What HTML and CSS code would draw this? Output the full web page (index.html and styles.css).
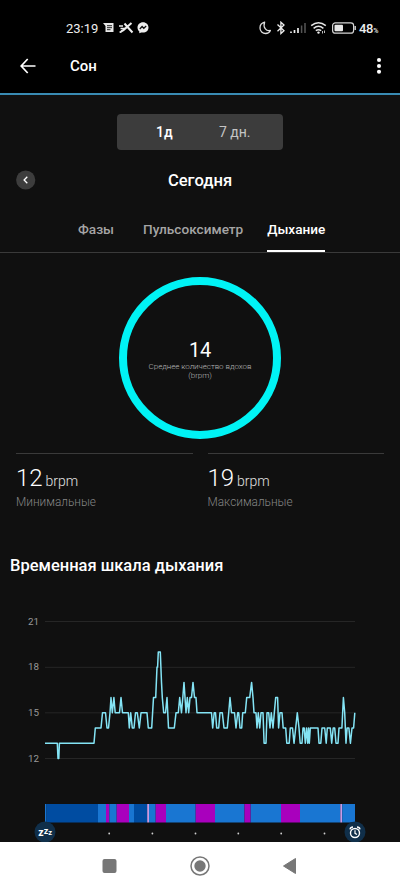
FILE: index.html
```html
<!DOCTYPE html>
<html lang="ru">
<head>
<meta charset="utf-8">
<title>Сон</title>
<link rel="stylesheet" href="styles.css">
</head>
<body>
<div class="phone">
  <header class="top">
    <div class="status">
      <span class="clock">23:19</span>
      <svg class="status-left" width="48" height="14" viewBox="0 0 48 14">
        <path fill="#e8e8e8" d="M0 2H10.500V11H2.500V5Z"/>
        <path stroke="#222" stroke-width="1" d="M4 4.700H9M4 6.700H9M4 8.700H7.500"/>
        <path fill="none" stroke="#eee" stroke-width="2" d="M28.500 2L24 6Q20.500 9.500 18 10.500M21.500 2.500L25 6.500L29.500 11.500"/>
        <path stroke="#eee" stroke-width="1.500" d="M16 5H20M17.500 7.500H22"/>
        <circle cx="17.500" cy="11" r="1.100" fill="#eee"/>
        <path fill="#eee" d="M40 1.200C36.800 1.200 34.500 3.500 34.500 6.400C34.500 8.200 35.200 9.400 36.300 10.400V12.300L38.300 11.400C42.500 12.200 45.500 9.800 45.500 6.400C45.500 3.500 43.200 1.200 40 1.200Z"/>
        <path fill="none" stroke="#111" stroke-width="1.300" d="M36.800 8L39.100 5.500L40.800 7.300L43.200 5.100"/>
      </svg>
      <svg class="status-right" width="98" height="14" viewBox="0 0 98 14">
        <path fill="none" stroke="#ddd" stroke-width="1.300" stroke-linejoin="round" d="M5.600 1.200C2.800 2 1 4.200 1 6.900C1 10.200 3.600 12.500 6.600 12.500C8.800 12.500 10.600 11.400 11.400 9.500C7 10.600 3.800 6 5.600 1.200Z"/>
        <path fill="none" stroke="#eee" stroke-width="1.300" d="M18.500 3.500L25 9.700L21.900 12.500V1.200L25 4L18.500 10.200"/>
        <path stroke="#eee" stroke-width="1.700" d="M32 12V10.500M35.500 12V9M39 12V7"/>
        <path stroke="#555" stroke-width="1.500" d="M42.600 12V4.500M46 12V2"/>
        <g fill="none" stroke="#e5e5e5" stroke-width="1.500"><path d="M52.200 4.600Q59.500-1.200 66.800 4.600M54.600 7.300Q59.500 3.300 64.400 7.300M56.800 9.700Q59.500 7.600 62.200 9.700"/></g>
        <circle cx="59.500" cy="11.600" r="1.200" fill="#eee"/>
        <path stroke="#bbb" stroke-width="1" d="M63.500 10V12.500M65.500 9.500V12"/>
        <rect x="73.600" y="1.800" width="21" height="10.400" rx="2.800" fill="none" stroke="#d5d5d5" stroke-width="1.200"/>
        <rect x="75.500" y="3.700" width="8.500" height="6.600" rx="1" fill="#e8e8e8"/>
        <path stroke="#ccc" stroke-width="1.500" d="M96.200 5V9"/>
      </svg>
      <span class="battery">48<small>%</small></span>
    </div>
    <div class="appbar">
      <svg class="back" width="16" height="16" viewBox="0 0 16 16"><path fill="none" stroke="#fff" stroke-width="1.700" d="M7.700 1L1.200 8L7.700 15M1.500 8H15.500"/></svg>
      <h1>Сон</h1>
      <svg class="more" width="6" height="18" viewBox="0 0 6 18" fill="#fff"><circle cx="3" cy="3" r="2.050"/><circle cx="3" cy="9" r="2.050"/><circle cx="3" cy="14.800" r="2.050"/></svg>
    </div>
  </header>

  <main>
    <div class="switch"><span class="on">1д</span><span class="off">7 дн.</span></div>
    <div class="day">
      <span class="prev"><svg width="20" height="20" viewBox="0 0 20 20"><circle cx="9.700" cy="10" r="9.600" fill="#3d3d3d"/><path fill="none" stroke="#fff" stroke-width="1.300" d="M11.300 6.800L8.100 10L11.300 13.200"/></svg></span>
      <h2>Сегодня</h2>
    </div>
    <nav class="tabs"><span>Фазы</span><span>Пульсоксиметр</span><span class="active">Дыхание</span></nav>

    <section class="ring">
      <strong>14</strong>
      <p>Среднее количество вдохов<br>(brpm)</p>
    </section>

    <section class="stats">
      <div class="stat"><div class="value">12 <small>brpm</small></div><div class="label">Минимальные</div></div>
      <div class="stat"><div class="value">19 <small>brpm</small></div><div class="label">Максимальные</div></div>
    </section>

    <h3>Временная шкала дыхания</h3>

    <svg class="chart" width="400" height="242" viewBox="0 600 400 242">
      <path stroke="#262626" stroke-width="1" d="M45 621.500H355M45 667.300H355M45 712.800H355M45 758.500H355"/>
      <g class="axis"><text x="39" y="624.500">21</text><text x="39" y="670.300">18</text><text x="39" y="715.800">15</text><text x="39" y="761.800">12</text></g>
      <path id="rate" class="rate"/>
      <g id="stages"></g>
      <g fill="#d0d0d0"><circle cx="109.200" cy="833.500" r=".9"/><circle cx="152.400" cy="833.500" r=".9"/><circle cx="195.500" cy="833.500" r=".9"/><circle cx="238.300" cy="833.500" r=".9"/><circle cx="281.200" cy="833.500" r=".9"/><circle cx="324.500" cy="833.500" r=".9"/></g>
      <circle cx="45" cy="832" r="10.500" fill="#102f4a"/>
      <text class="zzz" x="38.300" y="835.800"><tspan font-size="10.500">z</tspan><tspan font-size="9" dy="-2.300">z</tspan><tspan font-size="7.500" dy="1">z</tspan></text>
      <circle cx="355" cy="832" r="10.500" fill="#102f4a"/>
      <g fill="none" stroke="#fff" stroke-width="1.400"><circle cx="355" cy="833" r="4.500"/><path d="M350 829.300Q350.500 827 353 827M360 829.300Q359.500 827 357 827"/><path stroke-width="1.200" d="M355 830.300V833.300L357 834.500"/></g>
    </svg>
  </main>

  <footer class="nav">
    <svg width="400" height="47" viewBox="0 842 400 47">
      <rect x="102.500" y="859" width="14" height="14" rx="2" fill="#777"/>
      <circle cx="200" cy="866" r="9" fill="none" stroke="#777" stroke-width="1.500"/><circle cx="200" cy="866" r="5.700" fill="#777"/>
      <path d="M283.500 866L295.500 858.500V873.500Z" fill="#777" stroke="#777" stroke-width="1" stroke-linejoin="round"/>
    </svg>
  </footer>
</div>
<script src="chart.js"></script>
</body>
</html>
```
FILE: styles.css
```css
* { box-sizing: border-box; }
body { margin: 0; background: #101010; color: #fff; font-family: Roboto, sans-serif; }
h1, h2, h3, p { margin: 0; }
svg { display: block; flex: none; }
.phone { width: 400px; height: 889px; overflow: hidden; display: flex; flex-direction: column; }
.top { height: 95px; background: #000; border-bottom: 2px solid #398bb3; flex: none; }
.status { height: 42px; padding: 14px 19px 0 66px; display: flex; align-items: flex-start; }
.clock, .battery { font-size: 13px; line-height: 29px; height: 28px; color: #eee; }
.clock { width: 37px; white-space: nowrap; }
.battery { width: 22px; margin-left: 2px; white-space: nowrap; font-weight: 500; letter-spacing: -.3px; }
.battery small { font-size: 7px; }
.status-left { margin-top: 7px; }
.status-right { margin: 7px 0 0 auto; }
.appbar { height: 48px; padding: 0 18px 0 20px; display: flex; align-items: center; }
.appbar h1 { font-size: 15px; font-weight: 500; margin-left: 34px; }
.more { margin-left: auto; }
main { height: 747px; flex: none; display: flex; flex-direction: column; align-items: center; }
.switch { width: 166px; height: 36px; margin-top: 19px; border-radius: 4px; background: #3c3c3c; display: flex; align-items: center; font-size: 14px; }
.switch span { white-space: nowrap; }
.on { margin-left: 39px; width: 63px; font-weight: 500; }
.off { color: #c4c4c4; }
.day { width: 400px; height: 40px; margin-top: 10px; padding: 0 16px; display: grid; grid-template-columns: 20px 1fr 20px; align-items: center; }
.day h2 { font-size: 16.600px; font-weight: 500; text-align: center; }
.tabs { width: 400px; height: 53px; border-bottom: 1px solid #3a3a3a; display: flex; gap: 24px; padding: 0 0 0 78px; font-size: 13.600px; font-weight: 500; color: #a5a5a5; line-height: 59px; white-space: nowrap; }
.tabs span:first-child { margin-right: 5px; }
.tabs .active { color: #fff; border-bottom: 2px solid #fff; height: 52px; }
.ring { width: 162px; height: 162px; margin-top: 24px; border: 8px solid #00f3f5; border-radius: 50%; display: flex; flex-direction: column; align-items: center; text-align: center; padding-top: 54px; }
.ring strong { font-size: 20px; line-height: 23px; font-weight: 400; letter-spacing: -.3px; }
.ring p { font-size: 8px; line-height: 9.400px; letter-spacing: -.05px; font-weight: 300; color: #b8b8b8; white-space: nowrap; }
.stats { width: 368px; margin-top: 14px; display: flex; gap: 15px; font-weight: 300; }
.stat { flex: 1; border-top: 1px solid #3a3a3a; height: 70px; padding-top: 8px; }
.value { font-size: 24px; line-height: 32px; height: 32px; white-space: nowrap; word-spacing: -3px; }
.value small { font-size: 14px; color: #e0e0e0; }
.label { font-size: 11.850px; line-height: 14px; margin-top: 0.5px; color: #858585; }
h3 { align-self: flex-start; margin: 31px 0 0 10px; font-size: 16.500px; line-height: 23px; font-weight: 500; }
.chart { margin-top: auto; }
.axis { fill: #999; font-size: 9.800px; text-anchor: end; }
.rate { fill: none; stroke: #84e4f5; stroke-width: 1.500; stroke-linejoin: round; }
.zzz { fill: #fff; font-weight: 700; }
.nav { height: 47px; flex: none; background: #fff; }
```
FILE: chart.js
```js
// x position and breaths per minute
const samples = [45,13,57.3,13,58,12,58.8,12,59.4,13,94,13,95.3,14,101,14,102.5,15,105.5,15,107,14,108.500,14,110,15,111,16,112.3,15,113.9,16,115.2,15,119.5,15,121,16,122.5,15,128.3,15,129.3,14,130.7,15,132.300,14,134,14,135.5,15,137.3,15,139.3,14,141,15,147,15,148.3,14,151.7,14,153.5,16,155.7,16,157,18,157.6,18,158.3,19,160.3,19,161.5,17,162.3,16,163.7,15,165.5,15,167,16,168.5,14,174.3,14,176,15,178.3,15,179.7,16,181.5,15,182.8,16,184,17,186,15,187.3,16,188.7,15,190,16,191.5,16,193,17,194.5,16,196,16,197,15,211.5,15,212.7,14,214.2,15,215.500,15,216.7,14,218.7,14,220,15,222.3,15,224,14,227.3,14,228.7,15,230,16,231.5,15,234.5,15,236,14,237.7,15,238.7,15,240,14,241.7,14,242.7,15,245.3,15,246.7,16,249.7,16,251.6,17,253,16,254,15,256,15,257,14,258.3,15,259.7,14,261,15,263,15,264.1,13,266,13,267,15,268.7,15,270,14,271.3,15,273,14,274.3,15,275.7,16,277.6,16,278.6,14,280,15,282,15,283.2,14,285.700,14,286.8,13,289.2,13,290.3,14,292.5,14,294,13,295.7,14,297.3,15,299,14,300.2,13,302,13,303,14,304.2,14,305.3,13,306.5,14,307.7,13,308.5,14,309.3,13,310.3,14,318,14,319,13,320.8,13,322,14,324.7,14,326.2,13,327.3,14,330.3,14,331.7,13,333.2,14,334.7,14,336,13,338,13,339,14,341.9,14,343.4,16,344.7,15,346,13,347.1,14,348.9,14,350.4,13,352,14,353.6,14,354.8,15];
let path = "";
for (let i = 0; i < samples.length; i += 2) {
  path += (i ? "L" : "M") + samples[i] + " " + (758.5 - (samples[i + 1] - 12) * 15.23).toFixed(1);
}
document.getElementById("rate").setAttribute("d", path);

// start of each sleep stage and its colour
const stages = [[45,"#1976d2"],[46.5,"#004ca1"],[98,"#1976d2"],[106,"#a900bd"],[109.3,"#1976d2"],[116.7,"#a900bd"],[129,"#1976d2"],[134,"#004ca1"],[147.2,"#c79be8"],[149,"#1976d2"],[155.7,"#a900bd"],[166,"#1976d2"],[195.7,"#a900bd"],[215,"#1976d2"],[244.5,"#a900bd"],[250.7,"#1976d2"],[281,"#a900bd"],[300,"#1976d2"],[340.3,"#c79be8"],[342.2,"#1976d2"],[355]];
const bar = document.getElementById("stages");
for (let i = 0; i < stages.length - 1; i++) {
  const r = document.createElementNS("http://www.w3.org/2000/svg", "rect");
  r.setAttribute("x", stages[i][0]);
  r.setAttribute("y", 804);
  r.setAttribute("width", stages[i + 1][0] - stages[i][0]);
  r.setAttribute("height", 18.5);
  r.setAttribute("fill", stages[i][1]);
  bar.appendChild(r);
}
```
